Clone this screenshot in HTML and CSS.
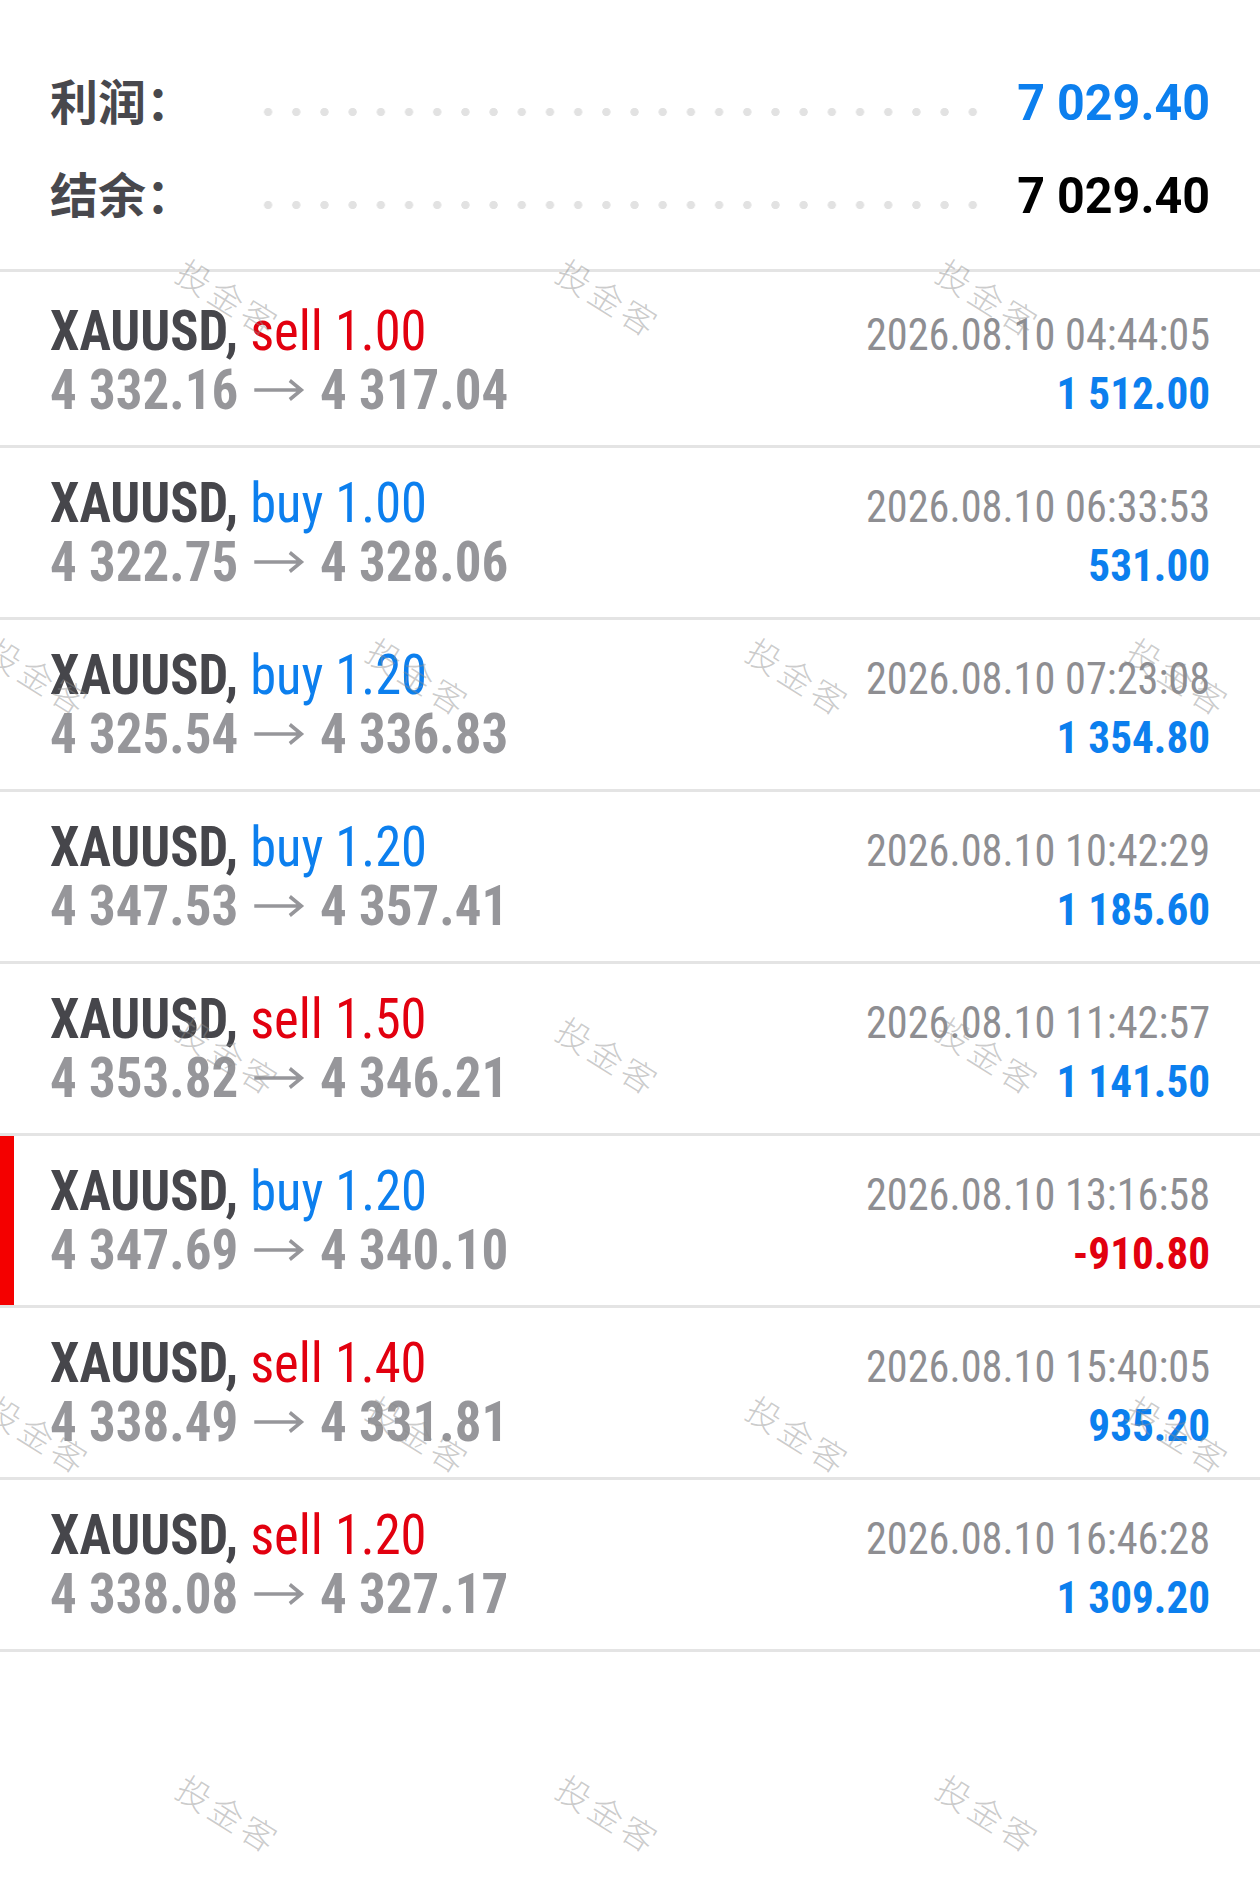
FILE: index.html
```html
<!DOCTYPE html>
<html lang="zh-CN">

	<head>
		<meta charset="UTF-8">
		<meta name="viewport" content="width=device-width, initial-scale=1.0">
		<title>历史</title>
		<link rel="stylesheet" href="styles.css">
	</head>

	<body>
		<div class="page">
			<div class="summary">
				<strong class="label">利润：</strong>
				<span class="dots"></span>
				<span class="total profit">7 029.40</span>
				<strong class="label">结余：</strong>
				<span class="dots"></span>
				<span class="total">7 029.40</span>
			</div>

			<ul class="deals">
				<li>
					<span class="title">XAUUSD, <em class="sell">sell 1.00</em></span>
					<span class="time">2026.08.10 04:44:05</span>
					<span class="prices">4 332.16<svg class="arrow" viewBox="0 0 52 22"><path d="M0 11H49M37 1.5L49 11L37 20.5"/></svg>4 317.04</span>
					<span class="pnl">1 512.00</span>
				</li>
				<li>
					<span class="title">XAUUSD, <em class="buy">buy 1.00</em></span>
					<span class="time">2026.08.10 06:33:53</span>
					<span class="prices">4 322.75<svg class="arrow" viewBox="0 0 52 22"><path d="M0 11H49M37 1.5L49 11L37 20.5"/></svg>4 328.06</span>
					<span class="pnl">531.00</span>
				</li>
				<li>
					<span class="title">XAUUSD, <em class="buy">buy 1.20</em></span>
					<span class="time">2026.08.10 07:23:08</span>
					<span class="prices">4 325.54<svg class="arrow" viewBox="0 0 52 22"><path d="M0 11H49M37 1.5L49 11L37 20.5"/></svg>4 336.83</span>
					<span class="pnl">1 354.80</span>
				</li>
				<li>
					<span class="title">XAUUSD, <em class="buy">buy 1.20</em></span>
					<span class="time">2026.08.10 10:42:29</span>
					<span class="prices">4 347.53<svg class="arrow" viewBox="0 0 52 22"><path d="M0 11H49M37 1.5L49 11L37 20.5"/></svg>4 357.41</span>
					<span class="pnl">1 185.60</span>
				</li>
				<li>
					<span class="title">XAUUSD, <em class="sell">sell 1.50</em></span>
					<span class="time">2026.08.10 11:42:57</span>
					<span class="prices">4 353.82<svg class="arrow" viewBox="0 0 52 22"><path d="M0 11H49M37 1.5L49 11L37 20.5"/></svg>4 346.21</span>
					<span class="pnl">1 141.50</span>
				</li>
				<li class="active">
					<span class="title">XAUUSD, <em class="buy">buy 1.20</em></span>
					<span class="time">2026.08.10 13:16:58</span>
					<span class="prices">4 347.69<svg class="arrow" viewBox="0 0 52 22"><path d="M0 11H49M37 1.5L49 11L37 20.5"/></svg>4 340.10</span>
					<span class="pnl loss">-910.80</span>
				</li>
				<li>
					<span class="title">XAUUSD, <em class="sell">sell 1.40</em></span>
					<span class="time">2026.08.10 15:40:05</span>
					<span class="prices">4 338.49<svg class="arrow" viewBox="0 0 52 22"><path d="M0 11H49M37 1.5L49 11L37 20.5"/></svg>4 331.81</span>
					<span class="pnl">935.20</span>
				</li>
				<li>
					<span class="title">XAUUSD, <em class="sell">sell 1.20</em></span>
					<span class="time">2026.08.10 16:46:28</span>
					<span class="prices">4 338.08<svg class="arrow" viewBox="0 0 52 22"><path d="M0 11H49M37 1.5L49 11L37 20.5"/></svg>4 327.17</span>
					<span class="pnl">1 309.20</span>
				</li>
			</ul>

			<!-- 水印 -->
			<div class="marks">
				<div class="mark-row"><i>投金客</i><i>投金客</i><i>投金客</i><i>投金客</i></div>
				<div class="mark-row shift"><i>投金客</i><i>投金客</i><i>投金客</i><i>投金客</i></div>
				<div class="mark-row"><i>投金客</i><i>投金客</i><i>投金客</i><i>投金客</i></div>
				<div class="mark-row shift"><i>投金客</i><i>投金客</i><i>投金客</i><i>投金客</i></div>
				<div class="mark-row"><i>投金客</i><i>投金客</i><i>投金客</i><i>投金客</i></div>
			</div>
		</div>
	</body>

</html>
```

FILE: styles.css
```css
* {
	margin: 0;
	padding: 0;
	list-style: none;
	box-sizing: border-box;
}

body {
	background: #fff;
	font-family: Roboto, "Noto Sans CJK SC", sans-serif;
	overflow: hidden;
}

.page {
	position: relative;
	width: 1260px;
	height: 1891px;
	overflow: hidden;
}

/* 顶部汇总 */
.summary {
	display: grid;
	grid-template-columns: 204px 733px 1fr;
	grid-auto-rows: 93px;
	align-items: baseline;
	height: 272px;
	padding: 52.6px 50px 0;
	border-bottom: 3px solid #e4e4e4;
}

.summary .label {
	font-family: "Noto Sans CJK SC", sans-serif;
	font-size: 48px;
	font-weight: 700;
	line-height: 93px;
	color: #48484d;
}

.summary .dots {
	align-self: stretch;
	background-image: radial-gradient(circle, #e2e2e2 3.8px, transparent 4.4px);
	background-size: 28.2px 12px;
	background-position: 0 53.1px;
	background-repeat: repeat-x;
}

.summary .total {
	text-align: right;
	font-size: 50.6px;
	font-weight: 700;
	line-height: 93px;
	color: #000;
	transform: scaleX(0.957);
	transform-origin: right center;
}

.summary .profit {
	color: #0c7fee;
}

/* 成交列表 */
.deals li {
	display: grid;
	grid-template-columns: 1fr auto;
	grid-auto-rows: 59px;
	align-items: baseline;
	height: 172px;
	padding: 25.7px 50px 0;
	border-bottom: 3px solid #e4e4e4;
	font-family: "Roboto Condensed", Roboto, sans-serif;
	font-stretch: condensed;
	line-height: 59px;
}

.deals li:first-child {
	height: 176px;
	padding-top: 29.7px;
}

.deals .active {
	box-shadow: inset 14px 0 0 #f40000;
}

.title {
	font-size: 55px;
	font-weight: 700;
	color: #46464b;
	transform: scaleX(0.955);
	transform-origin: left center;
}

.title em {
	font-style: normal;
	font-weight: 400;
}

.sell {
	color: #e2000f;
}

.buy {
	color: #0c7fee;
}

.prices {
	font-size: 55px;
	font-weight: 700;
	color: #96969a;
	transform: scaleX(0.963);
	transform-origin: left center;
}

.arrow {
	width: 52px;
	height: 22px;
	margin: 0 16px 0 17px;
	vertical-align: 8px;
	fill: none;
	stroke: #96969a;
	stroke-width: 3.6;
}

.time {
	text-align: right;
	font-size: 45px;
	color: #8e8e92;
	transform: scaleX(0.94);
	transform-origin: right center;
}

.pnl {
	text-align: right;
	font-size: 45px;
	font-weight: 700;
	color: #0c7fee;
	transform: scaleX(0.96);
	transform-origin: right center;
}

.pnl.loss {
	color: #e2000f;
}

/* 水印层 */
.marks {
	position: absolute;
	top: 0;
	left: 0;
	right: 0;
	bottom: 0;
	padding-top: 108px;
	pointer-events: none;
}

.mark-row {
	display: grid;
	grid-template-columns: repeat(4, 380px);
	grid-auto-rows: 379px;
	align-items: center;
	justify-items: center;
	margin-left: 39px;
}

.mark-row.shift {
	margin-left: -151px;
}

.mark-row i {
	font-style: normal;
	font-family: "Noto Sans CJK SC", sans-serif;
	font-weight: 300;
	font-size: 34px;
	letter-spacing: 4px;
	color: rgba(140, 140, 140, 0.45);
	transform: rotate(32deg);
}
```
